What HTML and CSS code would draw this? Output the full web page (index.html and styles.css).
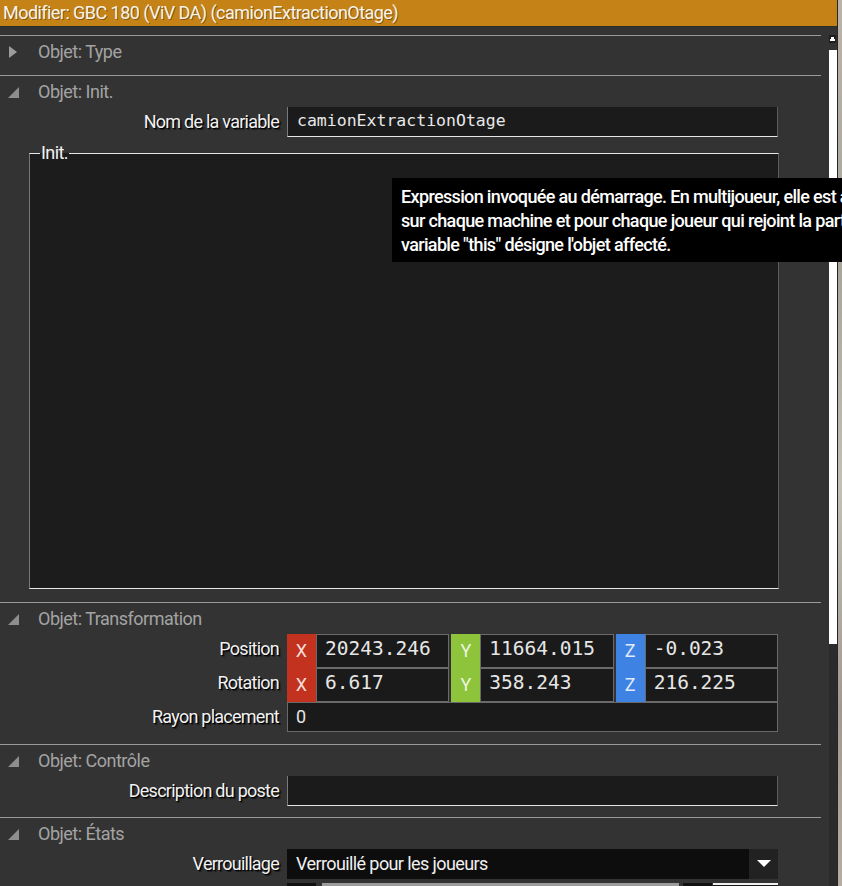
FILE: index.html
```html
<!DOCTYPE html>
<html lang="fr">
<head>
<meta charset="utf-8">
<title>Modifier</title>
<link rel="stylesheet" href="styles.css">
</head>
<body>
<div class="window">
  <div class="titlebar">Modifier: GBC 180 (ViV DA) (camionExtractionOtage)</div>
  <div class="main">
    <div class="content">
      <section class="sec">
        <div class="sec-head">
          <svg class="tri" width="12" height="14" viewBox="0 0 12 14"><path d="M1 1 L9 7 L1 13 Z" fill="#9c9c9c"/></svg>
          <span>Objet: Type</span>
        </div>
      </section>

      <section class="sec">
        <div class="sec-head">
          <svg class="tri" width="12" height="14" viewBox="0 0 12 14"><path d="M0 13 L11 2 L11 13 Z" fill="#8e8e8e"/></svg>
          <span>Objet: Init.</span>
        </div>
        <div class="rows">
          <div class="row">
            <div class="label">Nom de la variable</div>
            <div class="edit mono-s">camionExtractionOtage</div>
          </div>
        </div>
        <fieldset class="frame">
          <legend>Init.</legend>
          <div class="frame-body"></div>
        </fieldset>
      </section>

      <section class="sec">
        <div class="sec-head">
          <svg class="tri" width="12" height="14" viewBox="0 0 12 14"><path d="M0 13 L11 2 L11 13 Z" fill="#8e8e8e"/></svg>
          <span>Objet: Transformation</span>
        </div>
        <div class="rows">
          <div class="row">
            <div class="label">Position</div>
            <div class="xyz">
              <div class="axis"><span class="badge bx">X</span><span class="val">20243.246</span></div>
              <div class="axis"><span class="badge by">Y</span><span class="val">11664.015</span></div>
              <div class="axis"><span class="badge bz">Z</span><span class="val">-0.023</span></div>
            </div>
          </div>
          <div class="row">
            <div class="label">Rotation</div>
            <div class="xyz">
              <div class="axis"><span class="badge bx">X</span><span class="val">6.617</span></div>
              <div class="axis"><span class="badge by">Y</span><span class="val">358.243</span></div>
              <div class="axis"><span class="badge bz">Z</span><span class="val">216.225</span></div>
            </div>
          </div>
          <div class="row">
            <div class="label">Rayon placement</div>
            <div class="box">0</div>
          </div>
        </div>
      </section>

      <section class="sec sec-tight">
        <div class="sec-head">
          <svg class="tri" width="12" height="14" viewBox="0 0 12 14"><path d="M0 13 L11 2 L11 13 Z" fill="#8e8e8e"/></svg>
          <span>Objet: Contrôle</span>
        </div>
        <div class="rows">
          <div class="row">
            <div class="label">Description du poste</div>
            <div class="edit"></div>
          </div>
        </div>
      </section>

      <section class="sec">
        <div class="sec-head">
          <svg class="tri" width="12" height="14" viewBox="0 0 12 14"><path d="M0 13 L11 2 L11 13 Z" fill="#8e8e8e"/></svg>
          <span>Objet: États</span>
        </div>
        <div class="rows">
          <div class="row">
            <div class="label">Verrouillage</div>
            <div class="combo">
              <span class="combo-text">Verrouillé pour les joueurs</span>
              <span class="combo-btn"><svg width="14" height="8" viewBox="0 0 14 8"><path d="M0 0 H14 L7 7 Z" fill="#fff"/></svg></span>
            </div>
          </div>
          <div class="row">
            <div class="label"></div>
            <div class="slider">
              <span class="sl-a"></span>
              <span class="sl-bar"></span>
              <span class="sl-c"></span>
              <span class="sl-d"></span>
            </div>
          </div>
        </div>
      </section>
    </div>
    <div class="scrollbar">
      <div class="sb-btn"><svg width="7" height="7" viewBox="0 0 7 7"><path d="M2 1 H5 V3 H6 V5 H1 V3 H2 Z" fill="#fff"/></svg></div>
      <div class="sb-thumb"></div>
      <div class="sb-track"></div>
    </div>
  </div>
</div>
<div class="tooltip">
  <div>Expression invoquée au démarrage. En multijoueur, elle est appelée</div>
  <div>sur chaque machine et pour chaque joueur qui rejoint la partie. La</div>
  <div>variable "this" désigne l'objet affecté.</div>
</div>
</body>
</html>
```

FILE: styles.css
```css
* { box-sizing: border-box; }

html, body {
  margin: 0;
  padding: 0;
  height: 886px;
  overflow: hidden;
}

body {
  position: relative;
  background: linear-gradient(180deg, #b9b3a8 0%, #a9a49b 30%, #c4bfb4 55%, #9f998f 80%, #b3ada2 100%);
  font-family: Roboto, "Noto Sans", sans-serif;
}

.window {
  width: 838px;
  height: 886px;
  background: #333333;
  border-right: 1px solid #262626;
  display: flex;
  flex-direction: column;
  overflow: hidden;
}

.titlebar {
  height: 27px;
  flex: none;
  background: #c58317;
  border-bottom: 1px solid #2a2a2a;
  color: #f7f3ea;
  font-size: 18px;
  letter-spacing: -0.55px;
  line-height: 26px;
  padding-left: 3px;
  white-space: nowrap;
  text-shadow: 1px 1px 0 rgba(0,0,0,0.35);
}

.main {
  flex: 1;
  display: flex;
  min-height: 0;
}

.content {
  width: 829px;
  flex: none;
  padding-top: 8px;
}

.scrollbar {
  width: 8px;
  flex: none;
  display: flex;
  flex-direction: column;
}

.sb-btn {
  margin-top: 8px;
  width: 7px;
  height: 8px;
  background: #1e1e1e;
  display: flex;
  align-items: center;
  justify-content: center;
}

.sb-thumb {
  margin-top: 7px;
  height: 594px;
  background: #ffffff;
}

.sb-track {
  flex: 1;
  background: #2b2b2b;
}

.sec {
  margin-right: 8px;
  border-top: 1px solid #9a9a9a;
  padding-bottom: 8px;
}

.sec-tight {
  padding-bottom: 7px;
}

.sec-head {
  height: 31px;
  display: flex;
  align-items: center;
  color: #a3a3a3;
  font-size: 18px;
  letter-spacing: -0.5px;
  white-space: nowrap;
}

.sec-head .tri {
  margin-left: 8px;
  margin-right: 18px;
  flex: none;
}

.rows {
  display: flex;
  flex-direction: column;
  gap: 4px;
  padding-bottom: 4px;
}

.row {
  display: grid;
  grid-template-columns: 279px 491px;
  column-gap: 8px;
  height: 30px;
}

.label {
  text-align: right;
  color: #f2f2f2;
  font-size: 18px;
  letter-spacing: -0.75px;
  line-height: 30px;
  white-space: nowrap;
  text-shadow: 1px 1px 0 #000, 2px 2px 1px rgba(0,0,0,0.5);
}

.edit {
  background: #1b1b1b;
  border-left: 1px solid #7a7a7a;
  border-right: 1px solid #5c5c5c;
  border-bottom: 1px solid #e6e6e6;
  color: #e8e8e8;
  padding-left: 9px;
  white-space: nowrap;
  overflow: hidden;
}

.mono-s {
  font-family: "DejaVu Sans Mono", "Liberation Mono", monospace;
  font-size: 16.5px;
  line-height: 28px;
}

.frame {
  margin: 3px 0 5px 29px;
  width: 750px;
  padding: 0;
  border-style: solid;
  border-width: 1px;
  border-color: #e6e6e6 #5c5c5c #e6e6e6 #777777;
  background: #1c1c1c;
  min-inline-size: 0;
}

.frame legend {
  margin-left: 10px;
  padding: 0 1px;
  color: #f2f2f2;
  font-size: 18px;
  letter-spacing: -0.6px;
  line-height: 18px;
}

.frame-body {
  height: 426px;
}

.xyz {
  display: grid;
  grid-template-columns: repeat(3, 1fr);
  column-gap: 2px;
}

.axis {
  display: flex;
}

.badge {
  width: 29px;
  flex: none;
  color: rgba(255,255,255,0.85);
  font-size: 18px;
  text-align: center;
  line-height: 34px;
  overflow: hidden;
}

.bx { background: #c3321f; }
.by { background: #8dc43c; }
.bz { background: #3e82e4; }

.val, .box {
  flex: 1;
  background: #1a1a1a;
  border: 1px solid #6a6a6a;
  color: #e6e6e6;
  font-family: "DejaVu Sans Mono", "Liberation Mono", monospace;
  font-size: 19.5px;
  line-height: 28px;
  padding-left: 8px;
  white-space: nowrap;
  overflow: hidden;
}

.box {
  font-family: Roboto, sans-serif;
  font-size: 18px;
}

.combo {
  display: flex;
  background: #0d0d0d;
}

.combo-text {
  flex: 1;
  color: #f0f0f0;
  font-size: 18px;
  letter-spacing: -0.6px;
  line-height: 30px;
  padding-left: 9px;
  white-space: nowrap;
}

.combo-btn {
  width: 29px;
  background: #222222;
  display: flex;
  align-items: center;
  justify-content: center;
}

.slider {
  display: flex;
}

.sl-a { width: 29px; background: #111; }
.sl-bar { width: 357px; margin-left: 6px; background: #9c9c9c; }
.sl-c { width: 29px; margin-left: 4px; background: #111; }
.sl-d { flex: 1; margin-left: 1px; background: #1a1a1a; border-top: 2px solid #f0f0f0; }

.tooltip {
  position: absolute;
  left: 392px;
  top: 178px;
  width: 470px;
  height: 84px;
  background: #000;
  color: #fff;
  font-size: 18px;
  font-weight: 500;
  letter-spacing: -0.65px;
  line-height: 24px;
  padding: 7px 0 0 9px;
  white-space: nowrap;
  overflow: hidden;
}
```
